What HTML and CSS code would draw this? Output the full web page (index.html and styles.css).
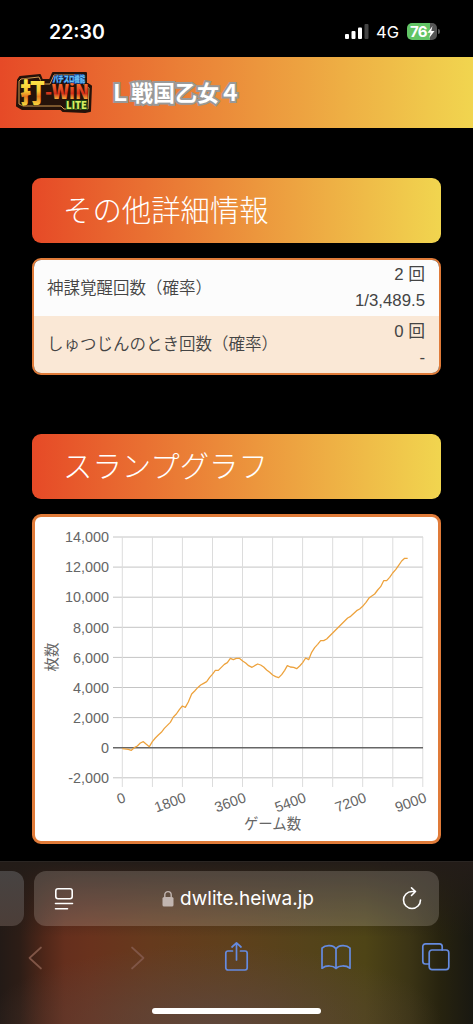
FILE: index.html
```
<!DOCTYPE html>
<html lang="ja">
<head>
  <meta charset="UTF-8">
  <meta name="viewport" content="width=device-width, initial-scale=1.0">
  <title>打-WIN LITE</title>
  <link rel="stylesheet" href="styles.css">
</head>
<body>
  <div class="status-bar">
    <span class="time">22:30</span>
    <div class="status-right">
      <svg class="signal" width="24" height="17" viewBox="0 0 24 17">
        <rect x="0" y="11" width="4" height="5" rx="1" fill="#fff"/>
        <rect x="6.5" y="8" width="4" height="8" rx="1" fill="#fff"/>
        <rect x="13" y="4.5" width="4" height="11.5" rx="1" fill="#fff"/>
        <rect x="19.5" y="1" width="4" height="15" rx="1" fill="#444"/>
      </svg>
      <span class="network">4G</span>
      <div class="battery">
        <span>76</span>
        <svg width="8" height="12" viewBox="0 0 8 12"><path d="M5.5 0L.5 6.8h3L2.2 12l5.3-7H4.3z" fill="#fff"/></svg>
      </div>
      <i class="battery-tip"></i>
    </div>
  </div>

  <header class="header">
    <svg class="logo" width="76" height="41" viewBox="0 0 76 41">
      <path d="M4 5L24 3L26 8H34L37 1H70V11L75 14L74 39L69 40L47 39L45 37H6L1 34L2 8Z" fill="#25120a" stroke="#25120a" stroke-width="2" stroke-linejoin="round"/>
      <path d="M5 7L23 5L26 12L34 12L38 3H68V13L73 16L72 37L48 37L45 34H7L3 32V9Z" fill="none" stroke="#d39a50" stroke-width="1" stroke-linejoin="round"/>
      <text class="logo-kanji" x="4" y="30.5" textLength="25" lengthAdjust="spacingAndGlyphs">打</text>
      <text class="logo-win" x="29" y="27" textLength="44" lengthAdjust="spacingAndGlyphs">-WiN</text>
      <text class="logo-sub" x="37" y="10" textLength="32" lengthAdjust="spacingAndGlyphs">パチスロ機能</text>
      <text class="logo-lite" x="50" y="37" textLength="21" lengthAdjust="spacingAndGlyphs">LITE</text>
      <defs>
        <linearGradient id="gold" x1="0" y1="0" x2="0" y2="1">
          <stop offset="0.2" stop-color="#ffe84a"/>
          <stop offset="0.5" stop-color="#f8c934"/>
          <stop offset="0.64" stop-color="#e87a20"/>
          <stop offset="0.85" stop-color="#f7d23b"/>
        </linearGradient>
        <linearGradient id="red" x1="0" y1="0" x2="0" y2="1">
          <stop offset="0.3" stop-color="#f56a2c"/>
          <stop offset="0.6" stop-color="#d2301a"/>
          <stop offset="0.8" stop-color="#f6b13a"/>
        </linearGradient>
      </defs>
    </svg>
    <h1>Ｌ戦国乙女４</h1>
  </header>

  <main>
    <h2>その他詳細情報</h2>
    <div class="data-table">
      <div class="row">
        <span class="label">神謀覚醒回数（確率）</span>
        <span class="value">2 回<br>1/3,489.5</span>
      </div>
      <div class="row">
        <span class="label">しゅつじんのとき回数（確率）</span>
        <span class="value">0 回<br>-</span>
      </div>
    </div>

    <h2>スランプグラフ</h2>
    <div class="chart">
      <svg width="402" height="324" viewBox="0 0 402 324">
        <!-- grid -->
        <path class="grid-h" d="M78 20H388M78 50.1H388M78 80.2H388M78 110.3H388M78 140.4H388M78 170.5H388M78 200.6H388M78 260.8H388"/>
        <path class="grid-v" d="M87.3 20V270M117.4 20V270M147.4 20V270M177.5 20V270M207.5 20V270M237.6 20V270M267.6 20V270M297.7 20V270M327.7 20V270M357.8 20V270M387.8 20V270"/>
        <path class="zero" d="M78 230.7H388"/>

        <g class="ticks-y">
          <text x="74" y="25.2">14,000</text>
          <text x="74" y="55.3">12,000</text>
          <text x="74" y="85.4">10,000</text>
          <text x="74" y="115.5">8,000</text>
          <text x="74" y="145.6">6,000</text>
          <text x="74" y="175.7">4,000</text>
          <text x="74" y="205.8">2,000</text>
          <text x="74" y="235.9">0</text>
          <text x="74" y="266">-2,000</text>
        </g>
        <g class="ticks-x">
          <text transform="translate(91.5 284.5) rotate(-20)">0</text>
          <text transform="translate(151.7 284.5) rotate(-20)">1800</text>
          <text transform="translate(211.9 284.5) rotate(-20)">3600</text>
          <text transform="translate(272.1 284.5) rotate(-20)">5400</text>
          <text transform="translate(332.3 284.5) rotate(-20)">7200</text>
          <text transform="translate(392.4 284.5) rotate(-20)">9000</text>
        </g>
        <text class="axis-title" transform="translate(22 140) rotate(-90)">枚数</text>
        <text class="axis-title" x="237.5" y="312">ゲーム数</text>

        <polyline class="line" transform="translate(-15 -17) scale(0.33333)" points="307,746 325,748 334,751 343,743 352,738 361,729 370,725 379,733 388,740 397,725 406,714 415,705 424,697 433,685 442,676 451,667 460,651 469,642 478,629 487,618 496,622 505,606 515,582 524,573 533,563 542,555 551,550 560,545 569,532 577,523 586,511 595,511 604,502 613,493 622,488 631,475 640,479 649,475 658,475 668,483 677,489 686,497 696,502 704,497 713,492 722,495 731,501 740,510 749,517 758,525 767,530 776,533 785,524 794,511 802,497 811,501 821,502 830,506 839,498 848,488 857,474 866,479 875,457 884,443 893,433 902,422 911,422 920,417 938,399 956,381 983,354 992,349 1010,332 1019,327 1028,319 1038,307 1048,293 1064,282 1073,270 1082,260 1091,242 1100,242 1109,232 1118,219 1127,209 1136,196 1145,183 1154,175 1163,175"/>
      </svg>
    </div>
  </main>

  <footer class="browser-bar">
    <div class="address-row">
      <div class="prev-tab"></div>
      <div class="address">
        <svg width="20" height="24" viewBox="0 0 20 24" fill="none" stroke="#fff" stroke-width="1.6" stroke-linecap="round">
          <rect x="1.8" y="1.8" width="16.4" height="10" rx="2.2"/>
          <path d="M1.5 16.5h17M1.5 21.8h12"/>
        </svg>
        <div class="url">
          <svg width="12" height="17" viewBox="0 0 12 17">
            <path d="M2.8 8V4.8a3.2 3.2 0 0 1 6.4 0V8" fill="none" stroke="#c1b5b0" stroke-width="1.4"/>
            <rect x="0.5" y="7" width="11" height="9.5" rx="1.6" fill="#c1b5b0"/>
          </svg>
          <span>dwlite.heiwa.jp</span>
        </div>
        <svg width="20" height="24" viewBox="0 0 20 24" fill="none" stroke="#fff" stroke-width="1.6" stroke-linecap="round" stroke-linejoin="round">
          <path d="M18.5 13a8.500 8.500 0 1 1-8.500-8.500h3.500M9.500 .9l4 3.600-4 4"/>
        </svg>
      </div>
    </div>
    <div class="toolbar">
      <svg width="30" height="32" viewBox="0 0 30 32" class="disabled"><path d="M19 5.500L7.500 16 19 26.500"/></svg>
      <svg width="30" height="32" viewBox="0 0 30 32" class="disabled"><path d="M10 5.500L21.500 16 10 26.500"/></svg>
      <svg width="30" height="32" viewBox="0 0 30 32"><path d="M10.500 9H6a2.200 2.200 0 0 0-2.200 2.200v14.600A2.200 2.200 0 0 0 6 28h17a2.200 2.200 0 0 0 2.200-2.200V11.200A2.200 2.200 0 0 0 23 9H18.500M14.500 18V1M10 5L14.500 .9 19 5"/></svg>
      <svg width="30" height="32" viewBox="0 0 30 32"><path d="M15 7C12.500 2.800 4.500 2.600 1 6.200v20c4-3 11-3 14 .2 3-3.200 10-3.200 14-.2v-20C25.500 2.600 17.500 2.800 15 7zM15 7v19.400"/></svg>
      <svg width="30" height="32" viewBox="0 0 30 32"><path d="M8 22H4.500a2.700 2.700 0 0 1-2.700-2.700V4.500a2.700 2.700 0 0 1 2.700-2.700H18.500a2.700 2.700 0 0 1 2.700 2.700V8"/><rect x="8.200" y="8" width="19.600" height="19.600" rx="2.800"/></svg>
    </div>
    <div class="home-indicator"></div>
  </footer>
</body>
</html>
```
FILE: styles.css
```
* {
  margin: 0;
  padding: 0;
  box-sizing: border-box;
}
body {
  width: 473px;
  height: 1024px;
  display: flex;
  flex-direction: column;
  overflow: hidden;
  background: #000;
  font-family: "Liberation Sans", "Noto Sans CJK JP", sans-serif;
}
svg {
  display: block;
  flex-shrink: 0;
  overflow: visible;
}

/* status bar */
.status-bar {
  height: 57px;
  padding: 6px 33px 0 49px;
  display: flex;
  justify-content: space-between;
  align-items: center;
  color: #fff;
  font-family: Inter, sans-serif;
}
.time {
  font-size: 19.5px;
  font-weight: 600;
}
.status-right {
  display: flex;
  align-items: center;
}
.network {
  margin: 0 8px 0 7px;
  font-size: 16.5px;
}
.battery {
  width: 30px;
  height: 17px;
  padding-left: 3px;
  display: flex;
  align-items: center;
  border-radius: 5px;
  background: linear-gradient(90deg, #62c466 76%, #555 76%);
  font-size: 15px;
  font-weight: 700;
  letter-spacing: -0.8px;
}
.battery-tip {
  width: 2px;
  height: 5px;
  margin-left: 1px;
  border-radius: 0 2px 2px 0;
  background: #555;
}

/* page header */
.header {
  height: 71px;
  padding-left: 16px;
  display: flex;
  align-items: center;
  background: linear-gradient(90deg, #e64a27, #f1d54f);
}
.header h1 {
  padding-bottom: 4px;
  margin-left: 17px;
  font-family: "Noto Sans CJK JP", sans-serif;
  font-size: 22px;
  font-weight: 700;
  line-height: 30px;
  color: #fff;
  -webkit-text-stroke: 4px #999;
  paint-order: stroke fill;
}
.logo text {
  font-family: "Noto Sans CJK JP", sans-serif;
  font-weight: 900;
  paint-order: stroke fill;
}
.logo .logo-kanji {
  font-size: 27px;
  fill: url(#gold);
  stroke: #2a0f06;
  stroke-width: 1px;
}
.logo .logo-win {
  font-size: 20px;
  fill: url(#red);
  stroke: #2a0f06;
  stroke-width: 1px;
}
.logo .logo-sub {
  font-size: 8.5px;
  fill: #65bdf2;
  stroke: #174a9c;
  stroke-width: 1.5px;
}
.logo .logo-lite {
  font-size: 10px;
  fill: #d8ee62;
  stroke: #1e4714;
  stroke-width: 2px;
}

main {
  height: 733px;
  padding: 50px 32px 0;
}
h2 {
  width: 409px;
  height: 65px;
  padding-left: 31px;
  border-radius: 9px;
  background: linear-gradient(90deg, #e64a27, #f1d54f);
  color: #fff;
  font-family: "Noto Sans CJK JP", sans-serif;
  font-size: 29.4px;
  font-weight: 300;
  line-height: 60px;
}

/* data table */
.data-table {
  width: 409px;
  height: 117px;
  margin: 15px 0 59px;
  border: 2.5px solid #e07b39;
  border-radius: 9px;
  overflow: hidden;
}
.row {
  height: 56px;
  padding: 0 14px 0 13px;
  display: flex;
  justify-content: space-between;
  align-items: center;
  background: #fcfcfc;
  color: #444;
  font-size: 16.8px;
}
.row + .row {
  height: 57px;
  background: #fae8d6;
}
.row .label {
  padding-bottom: 3px;
  font-family: "Noto Sans CJK JP", sans-serif;
  font-size: 16.5px;
  font-weight: 350;
}
.row .value {
  text-align: right;
  line-height: 26px;
}

/* slump graph */
.chart {
  width: 409px;
  height: 330px;
  margin-top: 15px;
  border: 3px solid #e07b39;
  border-radius: 9px;
  background: #fff;
}
.grid-h {
  stroke: #c4c4c4;
  stroke-width: 1;
}
.grid-v {
  stroke: #dcdcdc;
  stroke-width: 1;
}
.zero {
  stroke: #666;
  stroke-width: 1.4;
}
.line {
  fill: none;
  stroke: #eda23c;
  stroke-width: 3.8;
  stroke-linejoin: round;
}
.chart text {
  font-size: 14.4px;
  fill: #666;
  text-anchor: end;
}
.chart .axis-title {
  text-anchor: middle;
}

/* browser toolbar */
.browser-bar {
  height: 163px;
  display: flex;
  flex-direction: column;
  align-items: center;
  border-top: 1px solid #2a2522;
  background:
    linear-gradient(180deg, #231c18 0, rgba(35, 28, 24, 0.75) 20px, rgba(35, 28, 24, 0) 75px),
    radial-gradient(ellipse 230px 80px at 45% 100%, rgba(94, 72, 66, 0.8), rgba(94, 72, 66, 0)),
    linear-gradient(90deg, #231a16 0, #2d1d16 20px, #502719 45px, #652f1d 65px, #69321d 90px, #663a1d 150px, #5f401c 230px, #54431a 310px, #4e4416 365px, #3b3415 410px, #27230f 440px, #191811 473px);
}
.address-row {
  width: 100%;
  height: 65px;
  padding-top: 9px;
  display: flex;
  gap: 10px;
}
.prev-tab {
  width: 24px;
  height: 55px;
  border-radius: 0 12px 12px 0;
  background: linear-gradient(#474342, #4c3e38);
}
.address {
  width: 405px;
  height: 55px;
  padding: 0 17px 0 20px;
  display: flex;
  justify-content: space-between;
  align-items: center;
  border-radius: 12px;
  background: rgba(255, 245, 235, 0.18);
  color: #fff;
}
.url {
  display: flex;
  align-items: center;
  gap: 6px;
  font-family: Inter, sans-serif;
  font-size: 19px;
}
.toolbar {
  width: 100%;
  height: 61px;
  padding: 0 22px;
  display: flex;
  justify-content: space-between;
  align-items: center;
}
.toolbar svg {
  fill: none;
  stroke: #658be0;
  stroke-width: 1.7;
  stroke-linecap: round;
  stroke-linejoin: round;
}
.toolbar .disabled {
  stroke: #805647;
}
.home-indicator {
  width: 169px;
  height: 6px;
  margin-top: 20px;
  border-radius: 3px;
  background: #fff;
}
```
